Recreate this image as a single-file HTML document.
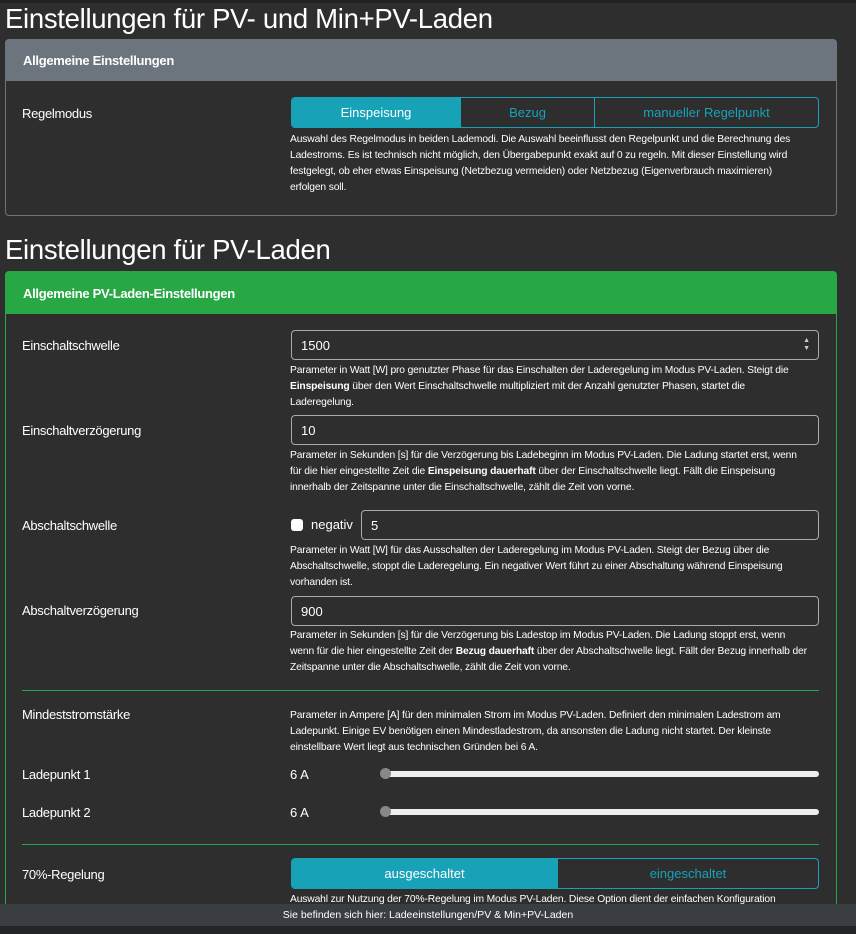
<!DOCTYPE html>
<html><head><meta charset="utf-8"><style>
*{box-sizing:border-box;margin:0;padding:0}
html,body{width:856px;height:934px;overflow:hidden}
body{background:#2e2e2e;color:#fff;font-family:"Liberation Sans",sans-serif;position:relative}
.abs{position:absolute}
h1{position:absolute;left:5px;font-weight:normal;font-size:27.5px;letter-spacing:-0.3px;color:#fff}
.card{position:absolute;left:5px;width:832px;border:1px solid #6c757d;border-radius:4px;background:#2e2e2e}
.hd{height:41px;background:#6c757d;color:#fff;font-weight:bold;font-size:13px;padding:13px 17px;letter-spacing:-0.3px}
.lbl{position:absolute;left:22px;font-size:13px;letter-spacing:-0.3px;color:#fff}
.help{position:absolute;left:290px;width:520px;font-size:10.3px;line-height:16px;color:#fff;letter-spacing:-0.15px}
.inp{position:absolute;left:291px;width:528px;height:30px;border:1px solid #aaa;border-radius:4px;background:#2e2e2e;font-size:13px;padding:7px 9px}
.grp{position:absolute;left:291px;width:528px;height:31px;border:1px solid #17a2b8;border-radius:4px;display:flex;overflow:hidden;font-size:13px}
.grp div{display:flex;align-items:center;justify-content:center;color:#17a2b8;border-left:1px solid #17a2b8}
.grp div.on{background:#17a2b8;color:#fff;border-left:none}
.hr{position:absolute;left:22px;width:797px;height:1px;background:#28a745}
.sl{position:absolute;left:383px;width:436px;height:6px;background:#eee;border-radius:3px}
.kn{position:absolute;left:380px;width:11px;height:11px;border-radius:50%;background:#888}
</style></head><body>
<div class="abs" style="left:0;top:0;width:856px;height:3px;background:#222"></div>
<h1 style="top:3px">Einstellungen für PV- und Min+PV-Laden</h1>
<div class="card" style="top:39px;height:177px">
<div class="hd">Allgemeine Einstellungen</div>
</div>
<div class="lbl" style="top:106px">Regelmodus</div>
<div class="grp" style="top:97px"><div class="on" style="width:168px">Einspeisung</div><div style="width:134px">Bezug</div><div style="flex:1">manueller Regelpunkt</div></div>
<div class="help" style="top:132px">Auswahl des Regelmodus in beiden Lademodi. Die Auswahl beeinflusst den Regelpunkt und die Berechnung des Ladestroms. Es ist technisch nicht möglich, den Übergabepunkt exakt auf 0 zu regeln. Mit dieser Einstellung wird festgelegt, ob eher etwas Einspeisung (Netzbezug vermeiden) oder Netzbezug (Eigenverbrauch maximieren) erfolgen soll.</div>

<h1 style="top:234px">Einstellungen für PV-Laden</h1>
<div class="card" style="top:271px;height:640px;border-color:#28a745">
<div class="hd" style="background:#28a745;height:42px;padding-top:14px">Allgemeine PV-Laden-Einstellungen</div>
</div>
<div class="lbl" style="top:338px">Einschaltschwelle</div>
<div class="inp" style="top:330px">1500<span style="position:absolute;right:8px;top:6px;font-size:7px;line-height:8px;color:#ccc">▲<br>▼</span></div>
<div class="help" style="top:363px">Parameter in Watt [W] pro genutzter Phase für das Einschalten der Laderegelung im Modus PV-Laden. Steigt die <b>Einspeisung</b> über den Wert Einschaltschwelle multipliziert mit der Anzahl genutzter Phasen, startet die Laderegelung.</div>
<div class="lbl" style="top:423px">Einschaltverzögerung</div>
<div class="inp" style="top:415px">10</div>
<div class="help" style="top:448px">Parameter in Sekunden [s] für die Verzögerung bis Ladebeginn im Modus PV-Laden. Die Ladung startet erst, wenn für die hier eingestellte Zeit die <b>Einspeisung dauerhaft</b> über der Einschaltschwelle liegt. Fällt die Einspeisung innerhalb der Zeitspanne unter die Einschaltschwelle, zählt die Zeit von vorne.</div>
<div class="lbl" style="top:518px">Abschaltschwelle</div>
<div class="abs" style="left:291px;top:519px;width:12px;height:12px;background:#fff;border-radius:3px"></div>
<div class="abs" style="left:311px;top:517px;font-size:13px">negativ</div>
<div class="inp" style="top:510px;left:361px;width:458px">5</div>
<div class="help" style="top:543px">Parameter in Watt [W] für das Ausschalten der Laderegelung im Modus PV-Laden. Steigt der Bezug über die Abschaltschwelle, stoppt die Laderegelung. Ein negativer Wert führt zu einer Abschaltung während Einspeisung vorhanden ist.</div>
<div class="lbl" style="top:603px">Abschaltverzögerung</div>
<div class="inp" style="top:596px">900</div>
<div class="help" style="top:628px">Parameter in Sekunden [s] für die Verzögerung bis Ladestop im Modus PV-Laden. Die Ladung stoppt erst, wenn wenn für die hier eingestellte Zeit der <b>Bezug dauerhaft</b> über der Abschaltschwelle liegt. Fällt der Bezug innerhalb der Zeitspanne unter die Abschaltschwelle, zählt die Zeit von vorne.</div>
<div class="hr" style="top:690px"></div>
<div class="lbl" style="top:707px">Mindeststromstärke</div>
<div class="help" style="top:708px">Parameter in Ampere [A] für den minimalen Strom im Modus PV-Laden. Definiert den minimalen Ladestrom am Ladepunkt. Einige EV benötigen einen Mindestladestrom, da ansonsten die Ladung nicht startet. Der kleinste einstellbare Wert liegt aus technischen Gründen bei 6 A.</div>
<div class="lbl" style="top:767px">Ladepunkt 1</div>
<div class="abs" style="left:290px;top:767px;font-size:13px">6 A</div>
<div class="sl" style="top:771px"></div><div class="kn" style="top:768px"></div>
<div class="lbl" style="top:805px">Ladepunkt 2</div>
<div class="abs" style="left:290px;top:805px;font-size:13px">6 A</div>
<div class="sl" style="top:809px"></div><div class="kn" style="top:806px"></div>
<div class="hr" style="top:844px"></div>
<div class="lbl" style="top:867px">70%-Regelung</div>
<div class="grp" style="top:858px"><div class="on" style="width:265px">ausgeschaltet</div><div style="flex:1">eingeschaltet</div></div>
<div class="help" style="top:892px;width:540px">Auswahl zur Nutzung der 70%-Regelung im Modus PV-Laden. Diese Option dient der einfachen Konfiguration</div>
<div class="abs" style="left:0;top:904px;width:856px;height:22px;background:#3a3e43;font-size:10.5px;text-align:center;line-height:22px;color:#fff">Sie befinden sich hier: Ladeeinstellungen/PV &amp; Min+PV-Laden</div>
<div class="abs" style="left:0;top:926px;width:856px;height:8px;background:#232528"></div>
</body></html>
